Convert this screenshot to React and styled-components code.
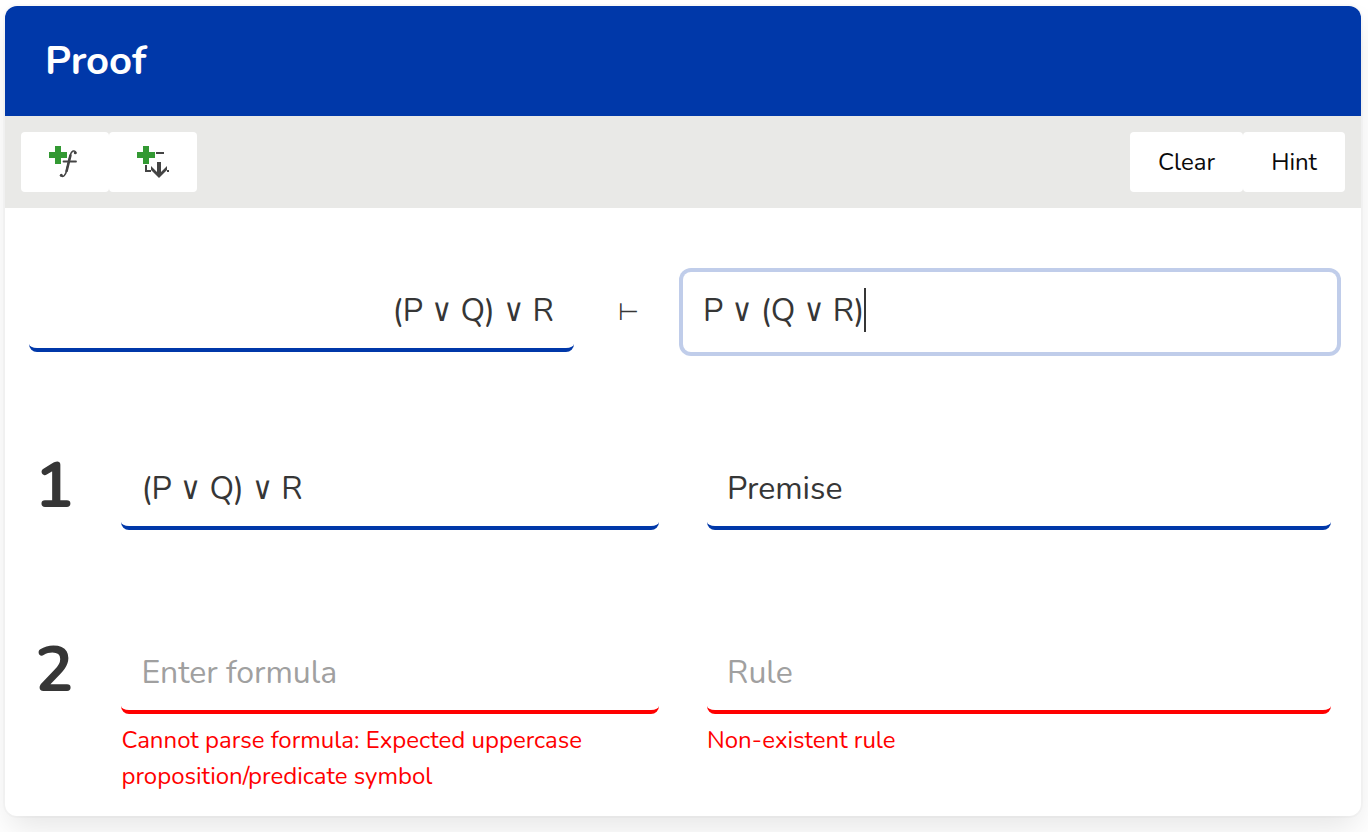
import React from "react";
import styled, { createGlobalStyle } from "styled-components";

const Global = createGlobalStyle`
  *, *::before, *::after { box-sizing: border-box; }
  body {
    margin: 0;
    background: #fff;
    color: #363636;
    font-family: Nunito, "DejaVu Sans Condensed", Lato, sans-serif;
    overflow-x: hidden;
  }
`;

const Page = styled.main`
  padding: 6px 7px 16px 5px;
`;

const Card = styled.section`
  background: #fff;
  border-radius: 12px;
  overflow: hidden;
  box-shadow: 0 16px 32px -4px rgba(10, 10, 10, 0.1), 0 0 0 2px rgba(10, 10, 10, 0.02);
`;

const Header = styled.header`
  background: #0038a9;
  color: #fff;
  padding: 25px 40px;
`;

const Title = styled.h1`
  margin: 0;
  font-size: 40px;
  font-weight: 700;
  line-height: 60px;
`;

const Toolbar = styled.div`
  display: flex;
  justify-content: space-between;
  padding: 16px;
  background: #e9e9e7;
`;

const ButtonGroup = styled.div`
  display: flex;
`;

const ToolButton = styled.button`
  display: flex;
  align-items: center;
  justify-content: center;
  height: 60px;
  padding: 0 28px;
  border: 0;
  border-radius: 4px;
  background: #fff;
  color: #0a0a0a;
  font: inherit;
  font-size: 24px;
  line-height: 36px;
`;

const IconSvg = styled.svg`
  display: block;
  width: 32px;
  height: 32px;
`;

const Sequent = styled.div`
  display: grid;
  grid-template-columns: minmax(0, 5fr) minmax(0, 1fr) minmax(0, 6fr);
  align-items: center;
  padding: 64px 24px 0;
`;

const Turnstile = styled.span`
  text-align: center;
  font-family: "DejaVu Sans", sans-serif;
  font-size: 24px;
`;

const InputBox = styled.div`
  display: flex;
  align-items: center;
  height: 80px;
  padding: 0 20px;
  border: 0 solid ${(p) => (p.$focused ? "transparent" : p.$invalid ? "#f00" : "#0038a9")};
  border-bottom-width: 4px;
  border-radius: 8px;
  background: #fff;
  box-shadow: ${(p) => (p.$focused ? "0 0 0 4px #c0cdea" : "none")};
`;

const TextInput = styled.input`
  flex: ${(p) => (p.$hug ? "0 1 auto" : "1 1 auto")};
  field-sizing: ${(p) => (p.$hug ? "content" : "fixed")};
  min-width: 0;
  height: 100%;
  padding: 0;
  border: 0;
  outline: 0;
  background: transparent;
  color: #363636;
  font: inherit;
  font-size: 32px;
  text-align: ${(p) => p.$align || "left"};

  &::placeholder {
    color: #a0a0a0;
    opacity: 1;
  }
`;

const Caret = styled.span`
  flex: none;
  width: 2px;
  height: 44px;
  background: #363636;
`;

const Lines = styled.ol`
  display: grid;
  gap: 104px;
  margin: 0;
  padding: 98px 30px 22px;
  list-style: none;
`;

const Line = styled.li`
  display: grid;
  grid-template-columns: minmax(0, 4fr) minmax(0, 56fr) minmax(0, 65fr);
  column-gap: 48px;
`;

const LineNumber = styled.span`
  font-size: 64px;
  font-weight: 700;
  line-height: 72px;
  text-align: center;
`;

const ErrorText = styled.p`
  margin: 8px 0 0;
  color: #f00;
  font-size: 24px;
  line-height: 36px;
`;

function AddFormulaIcon() {
  return (
    <IconSvg viewBox="0 0 32 32" aria-hidden="true">
      <g fill="none" stroke="#444" strokeLinecap="round">
        <path d="M26.5 6.5C26 4 22.500 4 21.200 9.500L17.500 25C16.500 29.500 14 31.500 12 29.800" strokeWidth="1.500" />
        <path d="M21.400 9.500L17.600 25" strokeWidth="2.600" />
        <path d="M14.500 15.500H27" strokeWidth="1.800" />
      </g>
      <circle cx="26.300" cy="6.800" r="1.500" fill="#444" />
      <circle cx="12.300" cy="29.300" r="1.500" fill="#444" />
      <path d="M6 0h6v6h6v6h-6v6H6v-6H0V6h6z" fill="#393" shapeRendering="crispEdges" />
    </IconSvg>
  );
}

function AddSubproofIcon() {
  return (
    <IconSvg viewBox="0 0 32 32" aria-hidden="true">
      <path d="M6 0h6v6h6v6h-6v6H6v-6H0V6h6z" fill="#393" shapeRendering="crispEdges" />
      <path d="M19 6h8v2h-8zM8 19h2v5h4v2H8zM30 24h2v2h-2z" fill="#444" />
      <path d="M20 16h4v10l6-6v4l-8 8-8-8v-4l6 6z" fill="#444" />
    </IconSvg>
  );
}

function Field({ id, label, error, focused, ...rest }) {
  return (
    <div>
      <InputBox $invalid={Boolean(error)} $focused={focused}>
        <TextInput
          id={id}
          aria-label={label}
          aria-invalid={error ? true : undefined}
          aria-describedby={error ? `${id}-error` : undefined}
          autoComplete="off"
          $hug={focused}
          {...rest}
        />
        {focused && <Caret aria-hidden="true" />}
      </InputBox>
      {error && <ErrorText id={`${id}-error`}>{error}</ErrorText>}
    </div>
  );
}

const proofLines = [
  { formula: "(P ∨ Q) ∨ R", rule: "Premise" },
  {
    formula: "",
    rule: "",
    formulaError: "Cannot parse formula: Expected uppercase proposition/predicate symbol",
    ruleError: "Non-existent rule",
  },
];

export default function App() {
  return (
    <Page>
      <Global />
      <Card>
        <Header>
          <Title>Proof</Title>
        </Header>
        <Toolbar>
          <ButtonGroup>
            <ToolButton type="button" aria-label="Add formula">
              <AddFormulaIcon />
            </ToolButton>
            <ToolButton type="button" aria-label="Add subproof">
              <AddSubproofIcon />
            </ToolButton>
          </ButtonGroup>
          <ButtonGroup>
            <ToolButton type="button">Clear</ToolButton>
            <ToolButton type="button">Hint</ToolButton>
          </ButtonGroup>
        </Toolbar>
        <Sequent>
          <Field id="premises" label="Premises" defaultValue="(P ∨ Q) ∨ R" $align="right" />
          <Turnstile>⊢</Turnstile>
          <Field id="conclusion" label="Conclusion" defaultValue="P ∨ (Q ∨ R)" focused />
        </Sequent>
        <Lines>
          {proofLines.map((line, i) => (
            <Line key={i}>
              <LineNumber>{i + 1}</LineNumber>
              <Field
                id={`formula-${i + 1}`}
                label={`Formula ${i + 1}`}
                placeholder="Enter formula"
                defaultValue={line.formula}
                error={line.formulaError}
              />
              <Field
                id={`rule-${i + 1}`}
                label={`Rule ${i + 1}`}
                placeholder="Rule"
                defaultValue={line.rule}
                error={line.ruleError}
              />
            </Line>
          ))}
        </Lines>
      </Card>
    </Page>
  );
}
